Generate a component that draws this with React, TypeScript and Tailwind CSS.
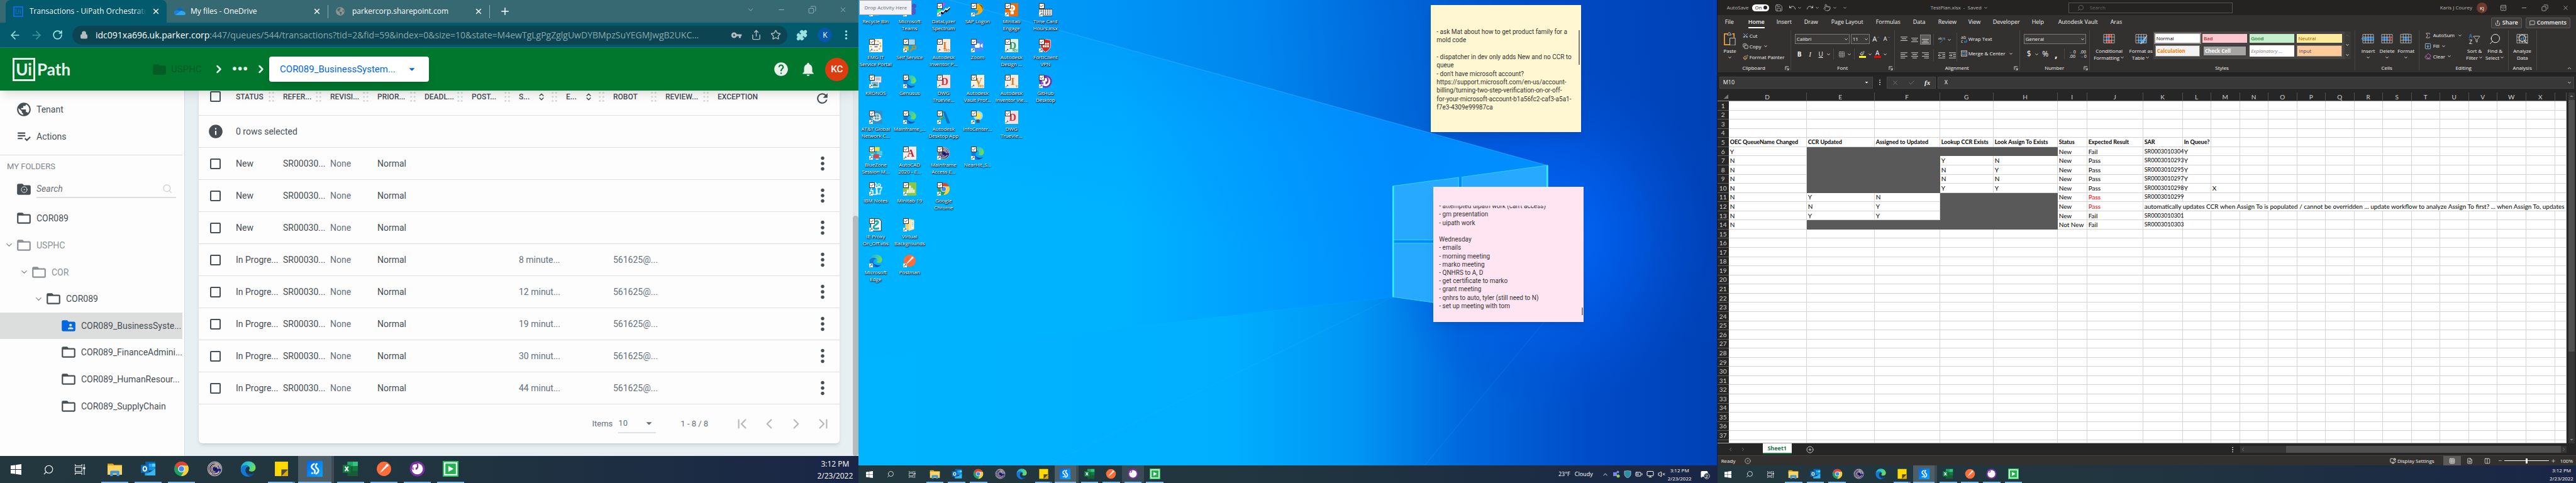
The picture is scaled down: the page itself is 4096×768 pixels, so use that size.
import React from "react";
import {
  ArrowLeft, ArrowRight, RotateCw, Lock, Share, Star, Puzzle, MoreVertical, X, Plus, Minus, Copy as CopyIcon,
  ChevronDown, ChevronUp, ChevronRight, ChevronLeft, ChevronFirst, ChevronLast, ChevronsUpDown, Search, Undo, Redo, Save,
  Pointer, Scissors, Paintbrush, Check, MessageSquare, Sigma, Eraser, Funnel, ArrowDownSquare, PanelTopOpen, Monitor,
  BatteryMedium, VolumeX, CirclePlus, Grid3x3, FileText, Columns2, MonitorCog, CircleDot,
} from "lucide-react";
import { FaGithub, FaGlobeAmericas } from "react-icons/fa";
import {
  MdPublic, MdPlaylistAddCheck, MdFolder, MdFolderOpen, MdFolderShared, MdHelp, MdNotifications, MdInfo, MdRefresh,
  MdArrowDropDown, MdMoreVert, MdVpnKey,
} from "react-icons/md";

type Pic = { className?: string };

/* ---------- application logos ---------- */

const Explorer = ({ className }: Pic) => (
  <svg viewBox="0 0 24 24" className={className}>
    <path d="M1 4h8l2 2h12v5H1z" fill="#e5a50f" />
    <path d="M1 7h22v14H1z" fill="#fcd462" />
    <path d="M5 23v-6.500c0-1 .7-1.700 1.700-1.700h10.600c1 0 1.700.7 1.700 1.700V23h-4v-4H9v4z" fill="#3a96dd" />
  </svg>
);
const Outlook = ({ className }: Pic) => (
  <svg viewBox="0 0 24 24" className={className}>
    <path d="M8 1h15v14H8z" fill="#0a64b4" />
    <path d="M13 4h5v5h-5z" fill="#28a8ea" />
    <path d="M18 4h5v5h-5z" fill="#50d9ff" />
    <path d="M13 9h10v5H13z" fill="#1490df" />
    <path d="M7 12l8 6 8-6v10H7z" fill="#1f9de8" />
    <path d="M7 22l16-10v10z" fill="#35b8f1" />
    <rect x="1" y="6" width="12" height="12" fill="#0f6cbd" />
    <ellipse cx="7" cy="12" rx="2.6" ry="3.2" fill="none" stroke="#fff" strokeWidth="1.7" />
  </svg>
);
const Chrome = ({ className }: Pic) => (
  <svg viewBox="0 0 24 24" className={className}>
    <circle cx="12" cy="12" r="11" fill="#1aa260" />
    <path d="M12 7h9.8A11 11 0 0 0 2.4 6.5l5.2 8A5 5 0 0 1 12 7z" fill="#e24134" />
    <path d="M21.8 7H12a5 5 0 0 1 4.4 7.5L11.5 23A11 11 0 0 0 21.8 7z" fill="#fdce3c" />
    <circle cx="12" cy="12" r="5.2" fill="#fff" />
    <circle cx="12" cy="12" r="4.1" fill="#4588f3" />
  </svg>
);
const Rings = ({ className }: Pic) => (
  <svg viewBox="0 0 24 24" className={className}>
    <circle cx="12" cy="12" r="11.2" fill="#b9b4b4" />
    <circle cx="12" cy="12" r="10" fill="#1d1f7c" />
    <path d="M12 2a10 10 0 0 1 10 10H12z" fill="#8f95c4" opacity="0.6" />
    <g fill="none" stroke="#e9cf8a" strokeWidth="1.100">
      <path d="M20.500 12a8.500 8.500 0 1 0-13 7" />
      <path d="M18.500 15a6.500 6.500 0 1 1-2-8" />
      <path d="M17 12a4.500 4.500 0 1 0-4 4.500" />
      <path d="M5 18c5 4.500 12 2 14-2" />
    </g>
    <circle cx="13.500" cy="12" r="2" fill="#10115c" />
  </svg>
);
const Edge = ({ className }: Pic) => (
  <svg viewBox="0 0 24 24" className={className}>
    <defs>
      <linearGradient id="edgeTop" x1="0" x2="1" y1="0.2" y2="0.5">
        <stop offset="0" stopColor="#1fa7e0" />
        <stop offset="0.55" stopColor="#35c9c0" />
        <stop offset="1" stopColor="#74dd4a" />
      </linearGradient>
    </defs>
    <path d="M7 10.500c-.6 7 6 12.500 15 8.300-2 3.300-5.500 5-9.500 5C6.500 23.800 3 18 7 10.500z" fill="#0d4f9e" />
    <path d="M.6 12.500C.6 8.500 4 6.300 8 6.300c2.500 0 4.500 1 5.500 2.700-3-.5-5.500 1.800-5.500 5.500 0 4.500 3.200 8 7 9-1 .3-2 .4-3 .4C5.500 23.900.6 19 .6 12.500z" fill="#1479d2" />
    <path d="M.7 11.600C1.100 5.200 6 .5 12.200.5c6.600 0 11.300 4.600 11.300 9.500 0 3.800-2.700 6-6 6-2.600 0-4.100-.9-4.100-1.900 0-.8 1-1.200 1-3 0-2.600-2.700-4.600-6-4.600-3.600 0-6.700 2-7.700 5.100z" fill="url(#edgeTop)" />
  </svg>
);
const Sticky = ({ className }: Pic) => (
  <svg viewBox="0 0 24 24" className={className}>
    <path d="M2 1h20v22H2z" fill="#ffd900" />
    <path d="M12 13h10v10H12z" fill="#e2a800" />
    <path d="M12 23V13h10z" fill="#4a4a48" />
  </svg>
);
const Studio = ({ className }: Pic) => (
  <svg viewBox="0 0 24 24" className={className}>
    <defs>
      <linearGradient id="studio" x1="0" x2="1" y1="0" y2="1">
        <stop offset="0" stopColor="#0068f0" />
        <stop offset="1" stopColor="#0aa4f5" />
      </linearGradient>
    </defs>
    <path d="M0 0h24v24H0z" fill="url(#studio)" />
    <g fill="none" stroke="#fff" strokeWidth="2.400" strokeLinecap="round">
      <path d="M11 4.500c-5 2-5 6-1 8 2.500 1.500 3 3.500 1.500 6" />
      <path d="M14 5.500c-1.500 3 0 4.500 1.500 5.500 3.500 2.500 2.500 6.500-1.500 8.500" />
    </g>
    <circle cx="15" cy="4.500" r="1.500" fill="#fff" />
    <circle cx="8" cy="18.500" r="1.500" fill="#fff" />
  </svg>
);
const Excel = ({ className }: Pic) => (
  <svg viewBox="0 0 24 24" className={className}>
    <path d="M7 1h16v22H7z" fill="#185c37" />
    <path d="M7 1h8v7H7z" fill="#21a366" />
    <path d="M15 1h8v7h-8z" fill="#33c481" />
    <path d="M15 8h8v7h-8z" fill="#107c41" />
    <rect x="0" y="6" width="12" height="12" fill="#107c41" />
    <path d="M3.500 8.500l5 7M8.500 8.500l-5 7" stroke="#fff" strokeWidth="1.800" />
  </svg>
);
const Postman = ({ className }: Pic) => (
  <svg viewBox="0 0 24 24" className={className}>
    <circle cx="12" cy="12" r="11" fill="#ff6c37" />
    <path d="M5.500 18.500l3-4.500 6-7 2 2-6.500 6z" fill="#fff" />
    <circle cx="16.800" cy="6.600" r="2.100" fill="#fff" />
  </svg>
);
const GitHub = ({ className }: Pic) => (
  <svg viewBox="0 0 24 24" className={className}>
    <circle cx="12" cy="12" r="11.500" fill="#7a2fa6" />
    <circle cx="12" cy="12" r="8.500" fill="#fff" />
    <FaGithub x="2" y="2" width="20" height="20" color="#7a2fa6" />
  </svg>
);
const Assistant = ({ className }: Pic) => (
  <svg viewBox="0 0 24 24" className={className}>
    <path d="M0 0h24v24H0z" fill="#28c65a" />
    <rect x="3" y="3" width="18" height="18" fill="#22b350" stroke="#fff" strokeWidth="2" />
    <path d="M8.500 7.500l8 4.500-8 4.500z" fill="#fff" />
  </svg>
);
const WinLogo = ({ className }: Pic) => (
  <svg viewBox="0 0 16 16" className={className} fill="#fff">
    <path d="M0 2.200L6.800 1.300v6.300H0zM7.600 1.200L16 0v7.600H7.600zM0 8.400h6.800v6.300L0 13.800zM7.600 8.400H16V16l-8.400-1.200z" />
  </svg>
);
const TaskView = ({ className }: Pic) => (
  <svg viewBox="0 0 16 16" className={className} fill="none" stroke="#fff" strokeWidth="1">
    <path d="M.500 0v2.500h10V0M.500 16v-2.500h10V16M.500 5h10v6H.500zM14 0v4M14 7.500V16" />
    <path d="M13 5h2v2h-2z" fill="#fff" />
  </svg>
);

/* ---------- taskbar ---------- */

type Task = { name: string; icon: (p: Pic) => React.ReactElement; open?: boolean };
const tasks: Task[] = [
  { name: "File Explorer", icon: Explorer, open: true },
  { name: "Outlook", icon: Outlook, open: true },
  { name: "Chrome", icon: Chrome, open: true },
  { name: "Mainframe Access", icon: Rings },
  { name: "Edge", icon: Edge },
  { name: "Sticky Notes", icon: Sticky, open: true },
  { name: "UiPath Studio", icon: Studio, open: true },
  { name: "Excel", icon: Excel, open: true },
  { name: "Postman", icon: Postman, open: true },
  { name: "GitHub Desktop", icon: GitHub, open: true },
  { name: "UiPath Assistant", icon: Assistant, open: true },
];

function Taskbar({ large, hover, children }: { large?: boolean; hover?: string; children: React.ReactNode }) {
  return (
    <footer
      className={`flex shrink-0 bg-linear-to-r from-[#22373e] via-[#20353f] via-50% to-[#1a2546] font-['Open_Sans',sans-serif] text-white ${
        large ? "h-[43px] text-xs" : "h-[28px] text-[8px]"
      }`}
    >
      {[
        { n: "Start", i: <WinLogo className={large ? "size-[17px]" : "size-[11px]"} /> },
        { n: "Search", i: <Search strokeWidth={1.5} className={`-scale-x-100 ${large ? "size-[18px]" : "size-[12px]"}`} /> },
        { n: "Task View", i: <TaskView className={large ? "size-[17px]" : "size-[11px]"} /> },
      ].map((b) => (
        <button key={b.n} aria-label={b.n} className={`flex items-center justify-center ${large ? "w-[51px]" : "w-[34px]"}`}>
          {b.i}
        </button>
      ))}
      <div className={`flex ${large ? "ml-[3px] w-[587px]" : "ml-[2px] w-[384px]"}`}>
        {tasks.map((t) => {
          const active = t.name === "UiPath Studio";
          const Icon = t.icon;
          return (
            <button
              key={t.name}
              aria-label={t.name}
              className={`flex flex-1 flex-col items-center justify-between ${
                active ? "border-r-4 border-[#3c4b54] bg-[#4e5e67]" : hover === t.name ? "bg-[#3a4a54]" : ""
              }`}
            >
              <span className="flex flex-1 items-center">
                <Icon className={large ? "size-[25px]" : "size-[17px]"} />
              </span>
              <span
                className={`h-[2px] ${active ? "w-full" : "w-4/5"} ${t.open ? "bg-[#76b9ed]" : ""} ${
                  t.name === "Sticky Notes" ? "border-r-4 border-[#4f86b4]" : ""
                }`}
              />
            </button>
          );
        })}
      </div>
      <div className="ml-auto flex items-center">{children}</div>
    </footer>
  );
}

const Clock = ({ large }: { large?: boolean }) => (
  <div className={`text-center ${large ? "w-[75px] leading-[19px]" : "w-[46px] leading-[13px]"}`}>
    <div>3:12 PM</div>
    <div>2/23/2022</div>
  </div>
);

/* ---------- left screen: browser with Orchestrator ---------- */

const BrowserTab = ({ title, icon, active }: { title: string; icon: React.ReactNode; active?: boolean }) => (
  <div className={`flex h-full w-[256px] items-center pr-[10px] pl-[12px] ${active ? "rounded-t-lg bg-[#035a6c]" : ""}`}>
    <span className="flex w-[26px]">{icon}</span>
    <span className={`flex-1 overflow-hidden whitespace-nowrap ${active ? "mask-r-from-90%" : ""}`}>{title}</span>
    <button aria-label="Close tab" className="ml-[8px]">
      <X className="size-[14px]" strokeWidth={2.500} />
    </button>
  </div>
);

const Grip = () => (
  <svg viewBox="0 0 12 18" className="h-[18px] w-[11px]" fill="#d9dcdd">
    {[2, 9, 16].map((y) => (
      <g key={y}>
        <circle cx="3" cy={y} r="1.700" />
        <circle cx="9" cy={y} r="1.700" />
      </g>
    ))}
  </svg>
);

const heads = [
  ["STATUS", "w-[75px]"], ["REFER...", "w-[75px]"], ["REVISI...", "w-[75px]"], ["PRIOR...", "w-[75px]"], ["DEADL...", "w-[75px]"],
  ["POST...", "w-[75px]"], ["S...", "w-[75px]"], ["E...", "w-[75px]"], ["ROBOT", "w-[83px]"], ["REVIEW...", "w-[83px]"], ["EXCEPTION", ""],
];
const waits = ["", "", "", "8 minute...", "12 minut...", "19 minut...", "30 minut...", "44 minut..."];

const Box = ({ label }: { label: string }) => (
  <input type="checkbox" aria-label={label} className="block size-[17px] appearance-none rounded-[2px] border-2 border-[#474e54]" />
);

const folders = [
  { t: "COR089", d: 0 },
  { t: "USPHC", d: 0, open: true, dim: true },
  { t: "COR", d: 1, open: true, dim: true },
  { t: "COR089", d: 2, open: true },
  { t: "COR089_BusinessSyste...", d: 3, on: true },
  { t: "COR089_FinanceAdmini...", d: 3 },
  { t: "COR089_HumanResour...", d: 3 },
  { t: "COR089_SupplyChain", d: 3 },
];
const indents = ["pl-[7px]", "pl-[31px]", "pl-[54px]", "pl-[78px]"];

function Orchestrator() {
  return (
    <section className="flex min-w-0 flex-col overflow-hidden">
      <div className="flex h-[36px] shrink-0 items-center bg-[#366972] pl-[9px] font-['Open_Sans',sans-serif] text-xs text-white">
        <BrowserTab
          active
          title="Transactions - UiPath Orchestrator"
          icon={<span className="border-2 border-[#0d6ae0] px-px text-[10px] leading-[13px] text-[#0d7af0]">Ui</span>}
        />
        <BrowserTab
          title="My files - OneDrive"
          icon={
            <svg viewBox="0 0 20 14" className="w-[18px]">
              <path d="M5 6a5 5 0 0 1 10-1l1 4H3z" fill="#0f63c8" />
              <path d="M4 5c4-1 6 1 8 3l-6 4-3 1a4 4 0 0 1 1-8z" fill="#1781d8" />
              <path d="M9 8c2-3 6-3 7-1 3 0 4 2 4 3.500S18.500 14 17 14H5c-2 0-3-1-3-1z" fill="#2ba7ea" />
            </svg>
          }
        />
        <span className="h-[21px] w-px bg-[#8fb0b5]" />
        <BrowserTab title="parkercorp.sharepoint.com" icon={<FaGlobeAmericas className="size-[14px] text-[#93928f]" />} />
        <span className="h-[21px] w-px bg-[#8fb0b5]" />
        <button aria-label="New tab" className="ml-[15px]">
          <Plus className="size-[18px]" />
        </button>
        <div className="mb-[6px] ml-auto flex text-[#a9c0c4]">
          {[ChevronDown, Minus, CopyIcon, X].map((I, i) => (
            <button key={i} aria-label="Window control" className="flex w-[49px] justify-center">
              <I className="size-[13px] -scale-x-100" strokeWidth={1.500} />
            </button>
          ))}
        </div>
      </div>
      <div className="flex h-[40px] shrink-0 items-center border-b border-[#2a7482] bg-[#035a6c] pr-[10px] text-[#9be3df]">
        <button aria-label="Back" className="ml-[14px]"><ArrowLeft className="size-[20px]" /></button>
        <button aria-label="Forward" className="ml-[14px] text-[#3f96a0]"><ArrowRight className="size-[20px]" /></button>
        <button aria-label="Reload" className="ml-[15px]"><RotateCw className="size-[17px]" strokeWidth={2.500} /></button>
        <div className="ml-[15px] flex h-[30px] min-w-0 flex-1 items-center gap-[14px] rounded-full bg-[#0c4551] pr-[10px] pl-[12px] text-[#b3bdc0]">
          <Lock className="size-[13px] fill-current" />
          <div role="textbox" aria-label="Address" className="-ml-[2px] min-w-0 flex-1 overflow-hidden font-['Open_Sans',sans-serif] text-sm whitespace-nowrap text-[#8aa9ae]">
            <span className="text-white">idc091xa696.uk.parker.corp</span>
            :447/queues/544/transactions?tid=2&amp;fid=59&amp;index=0&amp;size=10&amp;state=M4ewTgLgPgZglgUwDYBMpzSuYEGMJwgB2UKC...
          </div>
          <MdVpnKey className="size-[18px] shrink-0" />
          <Share className="size-[17px] shrink-0" />
          <Star className="size-[17px] shrink-0" />
        </div>
        <button aria-label="Extensions" className="ml-[14px]"><Puzzle className="size-[18px] fill-current" /></button>
        <button className="ml-[16px] size-[23px] rounded-full bg-[#0459a6] font-['Open_Sans',sans-serif] text-xs text-white">K</button>
        <button aria-label="Menu" className="ml-[13px]"><MoreVertical className="size-[19px]" strokeWidth={2.500} /></button>
      </div>
      <header className="relative z-10 flex h-[68px] shrink-0 items-center bg-[#00772d] font-['Roboto',sans-serif] text-[15px] text-[#e6f2ea] shadow-lg">
        <div className="ml-[20px] flex items-center font-['Lato',sans-serif] font-bold">
          <span className="flex h-[37px] w-[36px] items-center justify-center border-3 border-[#e6f2ea] text-[26px]">Ui</span>
          <span className="ml-[3px] text-[26px]">Path</span>
        </div>
        <div className="flex flex-1 items-center pl-[129px]">
          <MdFolder className="size-[25px] text-[#035c24]" />
          <span className="w-[72px] pl-[6px] text-[#035c24]">USPHC</span>
          <ChevronRight className="size-[20px]" strokeWidth={3} />
          <span className="w-[47px] text-center text-2xl leading-none font-bold">•••</span>
          <ChevronRight className="size-[20px]" strokeWidth={3} />
          <button className="ml-[3px] flex h-[40px] w-[254px] items-center rounded-[4px] bg-white pl-[17px] text-[#0067df] shadow-lg">
            COR089_BusinessSystem...
            <MdArrowDropDown className="ml-auto size-[22px]" />
            <span className="w-[16px]" />
          </button>
        </div>
        <button aria-label="Help"><MdHelp className="size-[26px]" /></button>
        <button aria-label="Alerts" className="ml-[17px]"><MdNotifications className="size-[26px]" /></button>
        <button className="mr-[16px] ml-[14px] size-[37px] rounded-full bg-[#dd3c11] font-medium text-white">KC</button>
      </header>
      <div className="flex min-h-0 flex-1 bg-[#e8eff3] font-['Roboto',sans-serif] text-sm text-[#474e54]">
        <nav className="w-[294px] shrink-0 border-r border-[#d5dbde] bg-[#fdfdfd] pr-[3px]">
          <div className="border-b border-[#dcdcdc] py-[8px]">
            <a href="#tenant" className="flex h-[43px] items-center pl-[25px]"><MdPublic className="size-[26px]" /><span className="pl-[7px]">Tenant</span></a>
            <a href="#actions" className="flex h-[43px] items-center pl-[25px]"><MdPlaylistAddCheck className="size-[26px]" /><span className="pl-[7px]">Actions</span></a>
          </div>
          <h2 className="pl-[11px] text-[13px] leading-[35px] text-[#7f868b]">MY FOLDERS</h2>
          <div className="flex h-[38px] items-center pl-[25px]">
            <span className="relative"><MdFolder className="size-[26px]" /><CircleDot className="absolute top-[8px] left-[8px] size-[11px] text-white" /></span>
            <label className="mr-[10px] ml-[7px] flex h-[27px] flex-1 items-center border-b-2 border-[#dcdedf]">
              <input aria-label="Search folders" placeholder="Search" className="w-[150px] italic placeholder:text-[#6b7278]" />
              <Search className="mr-[6px] ml-auto size-[16px] text-[#cfd1d2]" />
            </label>
          </div>
          <ul className="mt-[6px] flex h-[341px] flex-col">
            {folders.map((f, i) => (
              <li key={i} className={`flex flex-1 items-center whitespace-nowrap ${indents[f.d]} ${f.on ? "bg-[#dcdedd]" : ""} ${f.dim ? "text-[#8b9196]" : ""}`}>
                <span className="w-[18px]">{f.open && <ChevronDown className="size-[15px] text-[#7f868b]" />}</span>
                {f.on ? <MdFolderShared className="size-[26px] shrink-0 text-[#0067df]" /> : <MdFolderOpen className="size-[26px] shrink-0" />}
                <a href="#folder" className="pl-[7px]">{f.t}</a>
              </li>
            ))}
          </ul>
        </nav>
        <main className="flex min-w-0 flex-1 flex-col pl-[22px]">
          <div className="flex min-h-0 flex-1">
            <div className="mb-[20px] flex min-w-0 flex-1 flex-col rounded-b-[6px] bg-[#fdfdfd] shadow-md">
              <table className="w-full table-fixed border-separate border-spacing-0 text-left">
                <thead>
                  <tr className="h-[40px] align-top text-xs font-medium">
                    <th className="w-[59px] border-b border-[#dcdedf] pt-[1px] pl-[18px]"><Box label="Select all" /></th>
                    {heads.map(([h, w], i) => (
                      <th key={h} className={`border-b border-[#dcdedf] font-medium ${w}`}>
                        <span className="flex h-[20px] items-center whitespace-nowrap">
                          {h}
                          {(h === "S..." || h === "E...") && <ChevronsUpDown className="ml-[12px] size-[14px]" strokeWidth={2.500} />}
                          {i < 10 && <span className="mr-[13px] ml-auto"><Grip /></span>}
                        </span>
                      </th>
                    ))}
                    <th className="w-[53px] border-b border-[#dcdedf]"><button aria-label="Refresh" className="ml-[13px]"><MdRefresh className="size-[25px]" /></button></th>
                  </tr>
                </thead>
                <tbody>
                  <tr className="h-[51px]">
                    <td className="border-b border-[#dcdedf] pl-[14px]"><MdInfo className="size-[26px]" /></td>
                    <td colSpan={12} className="border-b border-[#dcdedf]">0 rows selected</td>
                  </tr>
                  {waits.map((w, i) => (
                    <tr key={i} className="h-[51px] whitespace-nowrap [&>td]:border-b [&>td]:border-[#dcdedf]">
                      <td className="pl-[18px]"><Box label={`Select row ${i + 1}`} /></td>
                      <td>{w ? "In Progre..." : "New"}</td>
                      <td>SR00030...</td>
                      <td className="text-[#66707a]">None</td>
                      <td>Normal</td>
                      <td />
                      <td />
                      <td className="text-[#66707a]">{w}</td>
                      <td />
                      <td className="text-[#66707a]">{w && "561625@..."}</td>
                      <td />
                      <td />
                      <td><button aria-label="Row actions" className="block pl-[9px]"><MdMoreVert className="size-[34px]" /></button></td>
                    </tr>
                  ))}
                </tbody>
              </table>
              <div className="flex min-h-0 flex-1 items-center text-[13px] text-[#66707a]">
                <label className="ml-auto flex items-center">
                  Items
                  <span className="relative ml-[9px] flex items-center border-b-2 border-[#dcdedf]">
                    <select className="h-[28px] w-[60px] appearance-none"><option>10</option></select>
                    <MdArrowDropDown className="pointer-events-none absolute right-0 size-[22px]" />
                  </span>
                </label>
                <span className="ml-[39px] w-[76px]">1 - 8 / 8</span>
                <div className="mr-[5px] flex text-[#b5b9bb]">
                  {[ChevronFirst, ChevronLeft, ChevronRight, ChevronLast].map((I, i) => (
                    <button key={i} aria-label="Page" className="flex w-[43px] justify-center"><I className="size-[26px]" /></button>
                  ))}
                </div>
              </div>
            </div>
            <div className="ml-[21px] w-[9px] bg-[#dfe5e8] pt-[199px]">
              <div className="h-full rounded-full bg-[#b6babc]" />
            </div>
          </div>
        </main>
      </div>
      <Taskbar large><Clock large /></Taskbar>
    </section>
  );
}

/* ---------- middle screen: desktop ---------- */

const Letter = ({ l, bg, fg, tag }: { l: string; bg: string; fg: string; tag?: string }) => (
  <svg viewBox="0 0 24 24" className="size-full">
    <rect width="24" height="24" fill={bg} />
    <text x="14" y="18" textAnchor="middle" fontSize="18" fontWeight="700" fontFamily="Liberation Serif, serif" fill={fg}>{l}</text>
    <text x="23" y="23" textAnchor="end" fontSize="5" fontWeight="700" fontFamily="Open Sans, sans-serif" fill={fg}>{tag}</text>
  </svg>
);
const full = "size-full";
const S = ({ children }: { children: React.ReactNode }) => <svg viewBox="0 0 24 24" className={full}>{children}</svg>;

const Lyzer = <S><path d="M6 0h10L4 14z" fill="#f3f" /><path d="M0 14l6-6v8H0z" fill="#1f3" /><path d="M2 22l6-5 2 2 5-6 2 2 6-6" stroke="#000" strokeWidth="2.500" fill="none" /><path d="M3 18l6-4 2 2 5-6 2 2 5-5" stroke="#fff" strokeWidth="2" fill="none" /></S>;
const Sap = <S><path d="M8 2c8-4 16 2 14 10-2 7-10 11-18 9 6-1 10-4 9-9-4 3-8 0-5-10z" fill="#f6ab13" /><path d="M14 2c6 0 9 5 7 11 0-5-3-8-7-11z" fill="#7b4a00" /></S>;
const Engage = <S><path d="M0 0h24v24H0z" fill="#ea6f0a" /><circle cx="13" cy="9" r="5.500" fill="#fff" /><path d="M10 15h6v5h-6z" fill="#fff" /><path d="M13 6v6M10 9h6" stroke="#ea6f0a" /></S>;
const TimeCard = <S><path d="M0 11h24v12H0z" fill="#fff" stroke="#222" /><path d="M4 12v10M8 12v10M12 12v10M16 12v10M20 12v10" stroke="#333" strokeDasharray="1.500 1" strokeWidth="2" /></S>;
const Emg = <S><path d="M0 0h24v24H0z" fill="#fff" /><circle cx="12" cy="12" r="9" fill="none" stroke="#f0a63a" strokeWidth="2.500" strokeDasharray="3 2" /><path d="M6 10h12M10 14h5" stroke="#333" strokeWidth="2" strokeDasharray="2 1" /></S>;
const SelfServ = <S><path d="M8 0h14v11H8z" fill="#9fd9f5" stroke="#4a5a66" /><path d="M1 13h9v8H1z" fill="#e7b923" /><circle cx="20" cy="15" r="3" fill="none" stroke="#c98e10" strokeWidth="2" /><path d="M18 17l-6 6" stroke="#c98e10" strokeWidth="2.500" /></S>;
const ZoomApp = <S><rect y="1" width="23" height="22" rx="6" fill="#3f8cfd" /><rect x="7" y="8" width="9" height="8" rx="2" fill="#fff" /><path d="M17 11l4-3v8l-4-3z" fill="#fff" /></S>;
const Forti = <S><path d="M3 2c6 0 7-2 9-2 2 0 4 2 9 2v10c0 6-5 9-9 12-4-3-9-6-9-12z" fill="#d42a1d" stroke="#eee" /><path d="M7 7h3v3H7zM11 7h3v3h-3zM15 7h3v3h-3zM7 11h3v4H7zM11 11h3v4h-3zM15 11h3v4h-3z" fill="#fff" /></S>;
const Kronos = <S><path d="M10 3h12v11H10z" fill="#eef2f6" stroke="#8a96a2" /><path d="M12 6h8M12 9h8" stroke="#667" /><path d="M4 12h13v10H4z" fill="#7fb3dd" stroke="#eee" strokeWidth="1.500" /><path d="M5 20l5-4 6 4z" fill="#3b7d4a" /></S>;
const Att = <S><rect width="24" height="24" rx="3" fill="#3490c5" /><g fill="none" stroke="#fff" strokeWidth="1.200"><circle cx="14" cy="12" r="6.500" /><path d="M7.500 12h13M14 5.500v13M10.500 6.500c-1.500 4-1.500 7 0 11M17.500 6.500c1.500 4 1.500 7 0 11" /><path d="M4 13c4 5 14 6 19 1" /></g></S>;
const AdApp = <S><path d="M9 6l5-5-9 21H0z" fill="#6fbf4a" /><path d="M11 1h4l9 22h-6z" fill="#1273bd" /><path d="M3 16l10-5 3 4z" fill="#2a9b9b" /></S>;
const Bulb = <S><circle cx="13" cy="9" r="8.500" fill="#9cdcff" /><circle cx="13" cy="9" r="5.500" fill="#ffe14a" /><path d="M9.500 16h6v6h-6z" fill="#4b5560" /></S>;
const BlueZone = <S><path d="M10 1h9v7h-9z" fill="#f2e53a" /><path d="M1 6h9v7H1z" fill="#6ad07c" /><path d="M14 8h10v8H14z" fill="#58c7e2" /><path d="M8 14h10v7H8z" fill="#e0443e" /><path d="M3 15h5M12 23h5M18 18h4" stroke="#dde" strokeWidth="2" /></S>;
const Notes = <S><g fill="none" stroke="#e3f6ff" strokeWidth="1.800"><circle cx="10" cy="4" r="3" /><circle cx="18" cy="5" r="2.500" /><path d="M5 9h8v13H7v-7H3zM14 9h9l-2 6h-1v6h-5z" /></g></S>;
const Minitab = <S><path d="M0 0h24v24H0z" fill="#8dc63f" /><path d="M7 13h3v6H7zM11 6h3v13h-3zM15 10h2.500v9H15zM18.500 13H21v6h-2.500z" fill="#fff" /></S>;
const Vbs = <S><path d="M3 1h15l4 4v18H3z" fill="#fff" stroke="#111" /><path d="M8 7c8-4 12 0 4 5s-3 9 6 6" stroke="#14b1b8" strokeWidth="3.500" fill="none" /></S>;
const Virtual = <S><path d="M4 3l7-2v20l-7 1z" fill="#f6d06c" /><path d="M10 1l10 2v17l-10 3z" fill="#fbe6a2" /><path d="M15 6h4v12h-4z" fill="#fff" /><path d="M16 8h2M16 11h2M16 14h2" stroke="#3a96dd" /></S>;
const Teams = <S><circle cx="20" cy="5" r="4" fill="#4b53bc" /><rect x="12" y="9" width="11" height="12" rx="4" fill="#5059c9" /></S>;
const Bin = <S><path d="M5 4h14l-2 18H7z" fill="#e8f2fa" stroke="#8aa" /></S>;
const edgePic = <Edge className={full} />;

type Item = [string[], React.ReactNode, boolean?];
const columns: Item[][] = [
  [
    [["Recycle Bin"], Bin], [["EMG IT", "Service Portal"], Emg], [["KRONOS"], Kronos], [["AT&T Global", "Network C..."], Att],
    [["BlueZone", "Session M..."], BlueZone], [["IBM Notes"], Notes], [["IE Proxy", "On_Off.vbs"], Vbs], [["Microsoft", "Edge"], edgePic, true],
  ],
  [
    [["Microsoft", "Teams"], Teams], [["Self Service"], SelfServ], [["Genusus"], edgePic], [["Mainframe_..."], edgePic],
    [["AutoCAD", "2020 - E..."], <Letter l="A" bg="#f6ebe9" fg="#c22026" />], [["Minitab 19"], Minitab], [["Virtual", "Backgrounds"], Virtual],
    [["Postman"], <Postman className={full} />, true],
  ],
  [
    [["DataLyzer", "Spectrum"], Lyzer], [["Autodesk", "Inventor P..."], <Letter l="I" bg="#fbeadb" fg="#d37a2c" tag="PRO" />],
    [["DWG", "TrueVie..."], <Letter l="D" bg="#f5dede" fg="#c6343b" />], [["Autodesk", "Desktop App"], AdApp],
    [["Mainframe", "Access E..."], <Rings className={full} />], [["Google", "Chrome"], <Chrome className={full} />],
  ],
  [
    [["SAP Logon"], Sap], [["Zoom"], ZoomApp], [["Autodesk", "Vault Prof..."], <Letter l="V" bg="#fbefd9" fg="#c98c2b" tag="PRO" />],
    [["InfoCenter..."], Bulb], [["NearHit_S..."], edgePic],
  ],
  [
    [["Minitab", "Engage"], Engage], [["Autodesk", "Design ..."], <Letter l="D" bg="#e0f0e8" fg="#2c9a62" tag="REV" />],
    [["Autodesk", "Inventor Vie..."], <Letter l="I" bg="#fbeadb" fg="#d37a2c" tag="V" />], [["DWG", "TrueVie..."], <Letter l="D" bg="#f5dede" fg="#c6343b" />],
  ],
  [[["Time Card", "Hours.xlsx"], TimeCard], [["FortiClient", "VPN"], Forti], [["GitHub", "Desktop"], <GitHub className={full} />]],
];

const Shortcut = ({ item: [lines, icon, plain] }: { item: Item }) => (
  <div className="flex h-[57px] flex-col items-center pt-[5px]">
    <span className="relative size-[21px]">
      {icon}
      <svg viewBox="0 0 6 6" className="absolute bottom-0 left-0 size-[6px]">
        <path d="M0 0h6v6H0z" fill="#fff" />
        <path d="M1.500 5c0-2 1-2.500 3-2.500M3 1.200h1.800V3.500" stroke="#2465b5" fill="none" />
      </svg>
      {!plain && (
        <label className="absolute top-0 left-0 size-[9px]">
          <input type="checkbox" defaultChecked aria-label={lines.join(" ")} className="block size-[9px] appearance-none border border-[#333] bg-white" />
          <Check className="pointer-events-none absolute top-px left-px size-[7px] text-[#333]" strokeWidth={3} />
        </label>
      )}
    </span>
    <span className="mt-[2px] text-center text-[8px] leading-[11px] whitespace-nowrap text-white [text-shadow:0_1px_2px_#000,1px_1px_1px_#000]">
      {lines.map((l) => <span key={l} className="block">{l}</span>)}
    </span>
  </div>
);

const Wallpaper = () => (
  <svg viewBox="0 0 1365 768" preserveAspectRatio="none" className="absolute inset-0 size-full">
    <defs>
      <linearGradient id="base" gradientUnits="userSpaceOnUse" x1="0" x2="1365" y1="120" y2="0">
        <stop offset="0" stopColor="#00a2fa" />
        <stop offset="0.3" stopColor="#0095f6" />
        <stop offset="0.46" stopColor="#0086ee" />
        <stop offset="0.62" stopColor="#0068da" />
        <stop offset="0.78" stopColor="#004cc6" />
        <stop offset="1" stopColor="#0040b4" />
      </linearGradient>
      <linearGradient id="beam" gradientUnits="userSpaceOnUse" x1="340" x2="260" y1="0" y2="330">
        <stop offset="0" stopColor="#0099f8" />
        <stop offset="0.5" stopColor="#00aaff" />
        <stop offset="1" stopColor="#00b3ff" />
      </linearGradient>
      <linearGradient id="shade" gradientUnits="userSpaceOnUse" x1="420" x2="1095" y1="0" y2="0">
        <stop offset="0" stopColor="#0084fc" stopOpacity="0" />
        <stop offset="0.65" stopColor="#0086fd" stopOpacity="0.85" />
        <stop offset="1" stopColor="#0090ff" />
      </linearGradient>
      <radialGradient id="glow" cx="0.5" cy="0.5" r="0.5">
        <stop offset="0" stopColor="#006cff" />
        <stop offset="0.5" stopColor="#0060f0" stopOpacity="0.6" />
        <stop offset="1" stopColor="#0050d8" stopOpacity="0" />
      </radialGradient>
      <linearGradient id="lower" gradientUnits="userSpaceOnUse" x1="0" x2="1365" y1="0" y2="0">
        <stop offset="0" stopColor="#00b4ff" />
        <stop offset="0.42" stopColor="#00b0ff" />
        <stop offset="0.58" stopColor="#0096f4" />
        <stop offset="0.7" stopColor="#006ade" />
        <stop offset="0.85" stopColor="#004cc8" />
        <stop offset="1" stopColor="#0040b4" />
      </linearGradient>
    </defs>
    <rect width="1365" height="768" fill="url(#base)" />
    <path d="M0 590L850 480L1095 500L1365 560V768H0z" fill="url(#lower)" />
    <ellipse cx="1095" cy="390" rx="270" ry="290" fill="url(#glow)" />
    <path d="M0 0H145L1095 273V525L850 490L0 592z" fill="url(#beam)" />
    <path d="M420 79L1095 273V525L850 490L420 541z" fill="url(#shade)" />
    <path d="M145 0L1095 273" stroke="#3fb4ff" strokeWidth="1.500" opacity="0.4" />
    <path d="M850 490L300 768M1095 525L900 768" stroke="#5cc8ff" strokeWidth="1" opacity="0.12" />
    <g fill="#27a9ff" stroke="#2fd8ff" strokeWidth="1">
      <path d="M850 307L954 292.600V396H850z" />
      <path d="M959.500 292L1095.600 272.800V396H959.500z" />
      <path d="M850 401.400H954V505L850 490z" />
      <path d="M959.500 401.400H1095.600V525L959.500 506z" />
    </g>
    <path d="M850 307V490M1095 273V525" stroke="#35f0ff" strokeWidth="2.500" />
  </svg>
);

const asks = [
  "- ask Mat about how to get product family for a", "mold code", "", "- dispatcher in dev only adds New and no CCR to", "queue",
  "- don't have microsoft account?", "https://support.microsoft.com/en-us/account-", "billing/turning-two-step-verification-on-or-off-",
  "for-your-microsoft-account-b1a56fc2-caf3-a5a1-", "f7e3-4309e99987ca",
];
const diary = [
  "- attempted uipath work (can't access)", "- gm presentation", "- uipath work", "", "Wednesday", "- emails", "- morning meeting",
  "- marko meeting", "- QNHRS to A, D", "- get certificate to marko", "- grant meeting", "- qnhrs to auto, tyler (still need to N)",
  "- set up meeting with tom",
];

const Note = ({ className, lines, body, list }: { className: string; lines: string[]; body: string; list: string }) => (
  <article className={`absolute w-[239px] overflow-hidden font-['Roboto',sans-serif] text-[10px] text-[#333] shadow-lg ${className}`}>
    <div className={`flex flex-col justify-end overflow-hidden ${body}`}>
      <div className={`flex shrink-0 flex-col whitespace-nowrap ${list}`}>
        {lines.map((l, i) => <p key={i} className="flex min-h-0 flex-1 items-center">{l}</p>)}
      </div>
    </div>
  </article>
);

function Desktop() {
  return (
    <section className="flex min-w-0 flex-col overflow-hidden font-['Open_Sans',sans-serif]">
      <div className="relative flex-1">
        <Wallpaper />
        <div className="relative flex">
          {columns.map((c, i) => (
            <div key={i} className="w-[54px]">
              {c.map((it) => <Shortcut key={it[0].join()} item={it} />)}
            </div>
          ))}
        </div>
        <div className="absolute top-0 left-px flex h-[24px] w-[84px] items-center justify-center border border-[#9a9aa0] bg-[#f1f2f8] text-[8px] text-[#6b6b70]">
          Drop Activity Here
        </div>
        <Note className="top-[8px] left-[910px] h-[202px] bg-[#fff7d1]" body="mt-[36px] ml-[9px] h-[133px]" list="h-[133px]" lines={asks} />
        <span className="absolute top-[48px] left-[1145px] h-[55px] w-[2px] bg-[#807e74]" />
        <Note className="top-[297px] left-[914px] h-[215px] bg-[#ffe4f1]" body="mt-[30px] ml-[9px] h-[166px]" list="h-[172px]" lines={diary} />
        <span className="absolute top-[489px] left-[1150px] h-[12px] w-[2px] bg-[#807e7e]" />
      </div>
      <Taskbar hover="GitHub Desktop">
        <span className="mr-[14px] text-[9px]">23°F&nbsp;&nbsp; Cloudy</span>
        <div className="flex items-center gap-[6px]">
          <ChevronUp className="size-[11px]" />
          <svg viewBox="0 0 12 12" className="size-[12px]"><path d="M1 3h6v6H1z" fill="#7b83eb" /><circle cx="8.500" cy="2.500" r="2" fill="#7b83eb" /><circle cx="9" cy="9" r="2.500" fill="#8fd13f" /></svg>
          <svg viewBox="0 0 12 12" className="size-[12px]"><path d="M6 0c2 1 3 1 5 1v5c0 3-3 5-5 6-2-1-5-3-5-6V1c2 0 3 0 5-1z" fill="#2a8f9c" stroke="#9ad" /></svg>
          <BatteryMedium className="size-[12px]" />
          <Monitor className="size-[12px]" />
          <VolumeX className="size-[12px]" />
        </div>
        <Clock />
        <span className="relative mr-[15px] ml-[10px]">
          <MessageSquare className="size-[12px] fill-white" />
          <span className="absolute top-[4px] left-[5px] size-[10px] rounded-full border border-[#aaa] bg-[#333c4c] text-center text-[8px] leading-[8px]">2</span>
        </span>
      </Taskbar>
    </section>
  );
}

/* ---------- right screen: spreadsheet ---------- */

const Chev = () => <ChevronDown className="size-[7px] shrink-0" strokeWidth={3} />;
const Rule = () => <span className="mx-[4px] h-[18px] w-px shrink-0 bg-[#4a4846]" />;
const Tool = ({ n, children, on }: { n: string; children: React.ReactNode; on?: boolean }) => (
  <button aria-label={n} className={`flex h-[16px] w-[17px] shrink-0 items-center justify-center ${on ? "border border-[#8a8886] bg-[#5c5a58]" : ""}`}>{children}</button>
);
const Lines = ({ d }: { d: string }) => (
  <svg viewBox="0 0 12 12" className="size-[11px]" fill="none" stroke="#e1dfdd" strokeWidth="1"><path d={d} /></svg>
);
const Group = ({ name, w, children, launcher }: { name: string; w: string; children: React.ReactNode; launcher?: boolean }) => (
  <section className={`flex h-[64px] shrink-0 flex-col border-r border-[#4a4846] ${w}`}>
    <div className="flex h-[54px] shrink-0">{children}</div>
    <div className="relative text-center leading-[12px]">
      {name}
      {launcher && (
        <svg viewBox="0 0 8 8" className="absolute top-[3px] right-[2px] size-[7px]" fill="none" stroke="#e1dfdd"><path d="M1 7V1h6M3 3l4 4M7 3.500V7H3.500" /></svg>
      )}
    </div>
  </section>
);
const Big = ({ icon, lines, w, arrow }: { icon: React.ReactNode; lines: string[]; w: string; arrow?: boolean }) => (
  <button className={`flex flex-col items-center pt-[3px] leading-[11px] whitespace-nowrap ${w}`}>
    <span className="mb-[3px] flex h-[21px] items-center">{icon}</span>
    <span>{lines[0]}</span>
    <span className="flex h-[11px] items-center gap-[1px]">{lines[1]}{arrow && <Chev />}</span>
  </button>
);
const Drop = ({ v, w, label }: { v: string; w: string; label: string }) => (
  <span className={`relative flex h-[16px] shrink-0 items-center border border-[#797775] bg-[#3b3a39] ${w}`}>
    <select aria-label={label} className="w-full appearance-none pl-[2px]"><option>{v}</option></select>
    <span className="pointer-events-none absolute right-[1px]"><Chev /></span>
  </span>
);
const Sheet = ({ accent, extra }: { accent: React.ReactNode; extra?: React.ReactNode }) => (
  <svg viewBox="0 0 24 20" className="h-[17px] w-[21px]" fill="none">
    {accent}
    <path d="M2 2h20v16H2zM2 7h20M2 13h20M7 2v16M12 2v16M17 2v16" stroke="#d2d0ce" strokeWidth="0.900" />
    {extra}
  </svg>
);

const gallery: [string, string][] = [
  ["Normal", "bg-white text-black outline-2 outline-[#8a8886]"], ["Bad", "bg-[#ffc7ce] text-[#9c0006]"], ["Good", "bg-[#c6efce] text-[#006100]"],
  ["Neutral", "bg-[#ffeb9c] text-[#9c5700]"], ["Calculation", "border border-[#7f7f7f] bg-[#f2f2f2] font-bold text-[#fa7d00]"],
  ["Check Cell", "border-2 border-[#3f3f3f] bg-[#a5a5a5] font-bold text-white"], ["Explanatory ...", "bg-white text-[#7f7f7f] italic"],
  ["Input", "border border-[#7f7f7f] bg-[#ffcc99] text-[#3f3f76]"],
];

const cols: [string, string][] = [
  ["D", "w-[124px]"], ["E", "w-[108px]"], ["F", "w-[104px]"], ["G", "w-[85px]"], ["H", "w-[102px]"], ["I", "w-[47px]"], ["J", "w-[89px]"],
  ["K", "w-[63px]"], ["L", "w-[45px]"], ["M", "w-[46px]"], ["N", "w-[45px]"], ["O", "w-[46px]"], ["P", "w-[45px]"], ["Q", "w-[46px]"],
  ["R", "w-[45px]"], ["S", "w-[46px]"], ["T", "w-[45px]"], ["U", "w-[46px]"], ["V", "w-[45px]"], ["W", "w-[46px]"], ["X", "w-[46px]"], ["", ""],
];
const long = "automatically updates CCR when Assign To is populated / cannot be overridden ... update workflow to analyze Assign To first? ... when Assign To, updates";
const data: Record<number, string[]> = {
  5: ["OEC QueueName Changed", "CCR Updated", "Assigned to Updated", "Lookup CCR Exists", "Look Assign To Exists", "Status", "Expected Result", "SAR", "In Queue?"],
  6: ["Y", "#", "#", "#", "#", "New", "Fail", "SR0003010304", "Y"],
  7: ["N", "#", "#", "Y", "N", "New", "Pass", "SR0003010293", "Y"],
  8: ["N", "#", "#", "N", "Y", "New", "Pass", "SR0003010295", "Y"],
  9: ["N", "#", "#", "N", "N", "New", "Pass", "SR0003010297", "Y"],
  10: ["N", "#", "#", "Y", "Y", "New", "Pass", "SR0003010298", "Y", "X"],
  11: ["N", "Y", "N", "#", "#", "New", "Pass", "SR0003010299"],
  12: ["N", "N", "Y", "#", "#", "New", "Pass", long],
  13: ["N", "Y", "Y", "#", "#", "New", "Fail", "SR0003010301"],
  14: ["N", "#", "#", "#", "#", "Not New", "Fail", "SR0003010303"],
};

function Grid() {
  return (
    <div className="min-h-0 min-w-0 flex-1 overflow-hidden border-b border-[#a0a0a0] bg-white">
      <table className="h-[569px] w-full table-fixed border-separate border-spacing-0 font-['Lato',sans-serif] text-[10px] leading-[10px] whitespace-nowrap text-black">
        <thead>
          <tr className="bg-[#262626] text-[#d2d0ce]">
            <th className="w-[18px] border-b border-[#8c8c8c]" aria-label="Corner">
              <svg viewBox="0 0 10 10" className="ml-auto size-[9px]"><path d="M9 1v8H1z" fill="#7a7a7a" /></svg>
            </th>
            {cols.map(([c, w], i) => (
              <th key={i} className={`h-[14px] border-r border-b border-r-[#505050] border-b-[#8c8c8c] font-normal ${w}`}>{c}</th>
            ))}
          </tr>
        </thead>
        <tbody>
          {Array.from({ length: 39 }, (_, r) => {
            const n = r + 1;
            const row = data[n] ?? [];
            return (
              <tr key={n}>
                <th className="border-b border-[#5a5a5a] bg-[#262626] text-center font-normal text-[#d2d0ce]">{n < 39 ? n : ""}</th>
                {cols.slice(0, n === 12 ? 8 : 22).map((_, i) => {
                  const v = row[i] ?? "";
                  if (v === "#") return <td key={i} className="border-r border-b border-[#595959] bg-[#595959]" />;
                  return (
                    <td
                      key={i}
                      colSpan={v === long ? 15 : 1}
                      className={`border-r border-b border-[#d4d4d4] pl-[2px] ${v === long ? "overflow-hidden" : ""} ${
                        n === 5 ? "text-[9px] font-bold" : ""
                      } ${v === "Pass" && n > 10 ? "text-[#ff0000]" : ""} ${v.startsWith("SR") ? "text-[9px]" : ""}`}
                    >
                      {v}
                    </td>
                  );
                })}
              </tr>
            );
          })}
        </tbody>
      </table>
    </div>
  );
}

function Spreadsheet() {
  return (
    <section className="flex min-w-0 flex-col overflow-hidden bg-[#262626] font-['Open_Sans',sans-serif] text-[8px] text-[#f3f2f1]">
      <div className="relative flex h-[24px] shrink-0 items-center bg-[#242322] pl-[15px] text-[#b8b6b4]">
        <span>AutoSave</span>
        <button className="ml-[5px] flex h-[11px] w-[27px] items-center justify-between rounded-full bg-white pr-[3px] pl-[5px] text-[#242322]">
          On<span className="size-[6px] rounded-full bg-[#242322]" />
        </button>
        <Save className="ml-[9px] size-[13px]" strokeWidth={1.500} />
        <Undo className="ml-[9px] size-[12px]" strokeWidth={2} /><span className="ml-[2px]"><Chev /></span>
        <Redo className="ml-[7px] size-[12px]" strokeWidth={2} /><span className="ml-[2px]"><Chev /></span>
        <Pointer className="ml-[6px] size-[12px]" strokeWidth={1.500} /><span className="ml-[3px]"><Chev /></span>
        <span className="ml-[9px]"><Chev /></span>
        <span className="absolute left-[339px] flex items-center gap-[3px]">TestPlan.xlsx&nbsp; -&nbsp; Saved <Chev /></span>
        <label className="absolute left-[558px] flex h-[17px] w-[261px] items-center border border-[#555] pl-[13px]">
          <Search className="size-[11px] -scale-x-100 text-[#666]" />
          <input aria-label="Search" placeholder="Search" className="ml-[9px] w-[200px] placeholder:text-[#666]" />
        </label>
        <span className="ml-auto">Karis J Courey</span>
        <span className="ml-[7px] size-[17px] rounded-full bg-[#6b3a2a] text-center leading-[17px] text-white">KJ</span>
        <div className="ml-[9px] flex">
          {[PanelTopOpen, Minus, CopyIcon, X].map((I, i) => (
            <button key={i} aria-label="Window control" className="flex w-[33px] justify-center"><I className="size-[11px] -scale-x-100" strokeWidth={1.800} /></button>
          ))}
        </div>
      </div>
      <div className="flex h-[24px] shrink-0 items-center bg-[#323130] pr-[9px] text-[9px]">
        {[["File", "w-[37px]"], ["Home", "w-[45px]"], ["Insert", "w-[44px]"], ["Draw", "w-[43px]"], ["Page Layout", "w-[71px]"], ["Formulas", "w-[59px]"],
          ["Data", "w-[40px]"], ["Review", "w-[48px]"], ["View", "w-[39px]"], ["Developer", "w-[62px]"], ["Help", "w-[42px]"], ["Autodesk Vault", "w-[83px]"],
          ["Aras", "w-[40px]"]].map(([t, w], i) => (
          <span key={t} className={`shrink-0 whitespace-nowrap ${w} ${i === 0 ? "ml-[12px]" : ""}`}>
            <button className={`h-[18px] border-b-2 ${t === "Home" ? "border-white font-semibold" : "border-transparent"}`}>{t}</button>
          </span>
        ))}
        <button className="ml-auto flex h-[17px] items-center gap-[3px] rounded-[2px] border border-[#5c5a58] bg-[#3f3e3d] px-[5px] font-semibold"><Share className="size-[9px]" />Share</button>
        <button className="ml-[6px] flex h-[17px] items-center gap-[3px] rounded-[2px] border border-[#5c5a58] bg-[#3f3e3d] px-[5px] font-semibold"><MessageSquare className="size-[9px]" />Comments</button>
      </div>
      <div className="flex h-[67px] shrink-0 overflow-hidden bg-[#323130] shadow-md">
        <Group name="Clipboard" w="w-[117px]" launcher>
          <Big
            w="w-[40px]" lines={["Paste"]} arrow
            icon={<svg viewBox="0 0 20 22" className="h-[21px]" fill="none"><path d="M6 3H1v18h10M14 3h3v6" stroke="#f0a23a" strokeWidth="1.800" /><path d="M6 4l2-3h2l2 3v1H6z" stroke="#d2d0ce" fill="#323130" /><path d="M10 10h9v12h-9z" fill="#323130" stroke="#d2d0ce" /></svg>}
          />
          <div className="flex h-[52px] flex-1 flex-col whitespace-nowrap">
            <button className="flex flex-1 items-center gap-[2px]"><Scissors className="size-[9px] -rotate-90 text-[#b7d3ea]" />Cut</button>
            <button className="flex flex-1 items-center gap-[2px]"><CopyIcon className="size-[9px]" />Copy<span className="ml-[2px]"><Chev /></span></button>
            <button className="flex flex-1 items-center gap-[2px]"><Paintbrush className="size-[9px] text-[#e8b96a]" />Format Painter</button>
          </div>
        </Group>
        <Group name="Font" w="w-[165px]" launcher>
          <div className="flex flex-col gap-[7px] pt-[6px] pl-[6px]">
            <div className="flex items-center gap-[2px]">
              <Drop v="Calibri" w="w-[87px]" label="Font" /><Drop v="11" w="w-[30px]" label="Font size" />
              <span className="flex"><Tool n="Grow font"><span className="text-[11px]">A</span><ChevronUp className="mb-[6px] size-[5px] text-[#3a96dd]" strokeWidth={4} /></Tool>
                <Tool n="Shrink font"><span className="text-[9px]">A</span><ChevronDown className="mb-[6px] size-[5px] text-[#3a96dd]" strokeWidth={4} /></Tool></span>
            </div>
            <div className="-ml-px flex items-center text-[10px]">
              <Tool n="Bold"><b>B</b></Tool><Tool n="Italic"><i className="font-['Liberation_Serif',serif]">I</i></Tool><Tool n="Underline"><u>U</u></Tool><Chev /><Rule />
              <Tool n="Borders"><Grid3x3 className="size-[11px]" strokeWidth={1} /></Tool><Chev /><Rule />
              <Tool n="Fill colour"><span className="flex flex-col items-center"><Paintbrush className="size-[8px]" /><span className="h-[3px] w-[11px] bg-[#ffff00]" /></span></Tool><Chev />
              <Tool n="Font colour"><span className="flex flex-col items-center leading-[9px]">A<span className="h-[3px] w-[11px] bg-[#ff0000]" /></span></Tool><Chev />
            </div>
          </div>
        </Group>
        <Group name="Alignment" w="w-[199px]" launcher>
          <div className="my-[4px] flex w-[99px] flex-col gap-[7px] border-r border-[#4a4846] pt-[2px] pl-[6px]">
            <div className="flex items-center">
              <Tool n="Top"><Lines d="M0 1h12M2 4h8M0 7h12" /></Tool><Tool n="Middle"><Lines d="M0 3h12M2 6h8M0 9h12" /></Tool>
              <Tool n="Bottom" on><Lines d="M0 5h12M2 8h8M0 11h12" /></Tool><Rule />
              <Tool n="Orientation"><svg viewBox="0 0 14 14" className="size-[12px]"><text x="1" y="7" fontSize="6" fill="#e1dfdd">ab</text><path d="M4 13l9-9M13 8V4H9" stroke="#3a96dd" fill="none" /></svg></Tool><Chev />
            </div>
            <div className="flex items-center">
              <Tool n="Left"><Lines d="M0 1h12M0 4h8M0 7h12M0 10h8" /></Tool><Tool n="Centre"><Lines d="M0 1h12M2 4h8M0 7h12M2 10h8" /></Tool>
              <Tool n="Right"><Lines d="M0 1h12M4 4h8M0 7h12M4 10h8" /></Tool><Rule />
              <Tool n="Outdent"><Lines d="M0 1h12M7 4h5M7 7h5M0 10h12M5 5.500H0l2-2M0 5.500l2 2" /></Tool><Tool n="Indent"><Lines d="M0 1h12M7 4h5M7 7h5M0 10h12M0 5.500h5l-2-2M5 5.500l-2 2" /></Tool>
            </div>
          </div>
          <div className="flex flex-col gap-[7px] pt-[6px] pl-[6px] whitespace-nowrap">
            <button className="flex h-[16px] items-center gap-[2px]"><svg viewBox="0 0 10 14" className="h-[14px] w-[10px]"><text y="7" fontSize="7" fill="#e1dfdd">ab</text><text y="13" fontSize="7" fill="#e1dfdd">c</text><path d="M9 8v4H5l2-2" stroke="#3a96dd" fill="none" /></svg>Wrap Text</button>
            <button className="flex h-[16px] items-center gap-[2px]"><svg viewBox="0 0 12 12" className="w-[10px]" fill="none"><path d="M.500.500h11v11H.500zM.500 3h11M.500 9h11" stroke="#d2d0ce" /><path d="M2 6h8M4 4L2 6l2 2M8 4l2 2-2 2" stroke="#3a96dd" /></svg>Merge &amp; Center<span className="ml-[4px]"><Chev /></span></button>
          </div>
        </Group>
        <Group name="Number" w="w-[111px]" launcher>
          <div className="flex flex-col gap-[7px] pt-[6px] pl-[6px]">
            <Drop v="General" w="w-[99px]" label="Number format" />
            <div className="flex items-center">
              <Tool n="Currency"><span className="text-xs">$</span></Tool><Chev /><span className="w-[2px]" /><Tool n="Percent"><span className="text-xs">%</span></Tool>
              <Tool n="Comma"><span className="text-base font-bold">,</span></Tool><Rule />
              <Tool n="Increase decimal"><span className="text-[7px] leading-[7px]"><span className="text-[#3a96dd]">←</span>0<br />.00</span></Tool>
              <Tool n="Decrease decimal"><span className="text-[7px] leading-[7px]">.00<br /><span className="text-[#3a96dd]">→</span>0</span></Tool>
            </div>
          </div>
        </Group>
        <Group name="Styles" w="w-[422px]">
          <Big w="w-[62px]" lines={["Conditional", "Formatting"]} arrow icon={<Sheet accent={<><path d="M7 2h10v5H7zM7 13h10v5H7z" fill="#d8281c" /><path d="M7 7h5v6H7z" fill="#0a6cc4" /></>} />} />
          <Big w="w-[39px]" lines={["Format as", "Table"]} arrow icon={<Sheet accent={<path d="M7 7h15v11H7z" fill="#0a5ea8" />} extra={<path d="M23 4l-9 11-3 5 5-3z" fill="#4aa3e0" stroke="#d2d0ce" />} />} />
          <div className="mt-[2px] flex h-[44px] flex-1 bg-[#454443] pl-[3px]">
            <div className="grid flex-1 grid-cols-4 gap-x-[4px] gap-y-[4px] py-[4px] pr-[4px]">
              {gallery.map(([t, c]) => <button key={t} className={`pl-[2px] text-left leading-[12px] whitespace-nowrap ${c}`}>{t}</button>)}
            </div>
            <div className="grid w-[10px] grid-rows-3 justify-items-center gap-[2px] bg-[#3b3a39]">
              <button aria-label="Up"><ChevronUp className="size-[7px] text-[#777]" /></button>
              <button aria-label="Down"><Chev /></button><button aria-label="More"><Chev /></button>
            </div>
          </div>
          <span className="w-[6px]" />
        </Group>
        <Group name="Cells" w="w-[102px]">
          <span className="w-[6px]" />
          <Big w="w-[30px]" lines={["Insert"]} arrow icon={<Sheet accent={<path d="M5 7h18v6H5z" fill="#0a6cc4" />} extra={<path d="M10 10H0M4 6l-4 4 4 4" stroke="#4aa3e0" strokeWidth="1.500" />} />} />
          <Big w="w-[30px]" lines={["Delete"]} arrow icon={<Sheet accent={<path d="M2 7h13v6H2z" fill="#0a6cc4" />} extra={<path d="M14 6l8 8M22 6l-8 8" stroke="#e0443e" strokeWidth="1.500" />} />} />
          <Big w="w-[30px]" lines={["Format"]} arrow icon={<Sheet accent={<path d="M7 7h10v6H7z" fill="#0a6cc4" />} extra={<path d="M6 0h12" stroke="#4aa3e0" />} />} />
        </Group>
        <Group name="Editing" w="w-[142px]">
          <div className="flex h-[50px] w-[72px] flex-col pl-[8px] whitespace-nowrap">
            <button className="flex flex-1 items-center gap-[3px]"><Sigma className="size-[11px]" strokeWidth={1.500} />AutoSum<span className="ml-[2px]"><Chev /></span></button>
            <button className="flex flex-1 items-center gap-[3px]"><ArrowDownSquare className="size-[11px] text-[#8cc4ee]" />Fill <Chev /></button>
            <button className="flex flex-1 items-center gap-[3px]"><Eraser className="size-[11px] text-[#c77bd0]" />Clear <Chev /></button>
          </div>
          <Big w="w-[32px]" lines={["Sort &", "Filter"]} arrow icon={<><span className="text-[9px] leading-[9px]"><span className="text-[#3a96dd]">A</span><br />Z</span><Funnel className="size-[12px]" strokeWidth={1.500} /></>} />
          <Big w="w-[33px]" lines={["Find &", "Select"]} arrow icon={<Search className="size-[20px] -scale-x-100" strokeWidth={1.200} />} />
        </Group>
        <Group name="Analysis" w="w-[45px]">
          <Big w="w-[45px]" lines={["Analyze", "Data"]} icon={<Sheet accent={null} extra={<><circle cx="12" cy="9" r="6" fill="#323130" stroke="#d2d0ce" strokeWidth="1.500" /><path d="M10 12V8M14 12V6" stroke="#3a96dd" strokeWidth="2" /><path d="M16 14l6 5" stroke="#d2d0ce" strokeWidth="1.500" /></>} />} />
        </Group>
        <button aria-label="Collapse ribbon" className="mt-auto mr-[6px] mb-[2px] ml-auto"><ChevronUp className="size-[9px]" /></button>
      </div>
      <div className="flex h-[32px] shrink-0 items-center gap-[3px] pr-[3px] pl-[3px] text-[9px]">
        <label className="flex h-[19px] w-[244px] items-center border border-[#484644] bg-[#383838] pr-[3px] pl-[5px]">
          <input aria-label="Name box" defaultValue="M10" className="w-0 flex-1" /><MdArrowDropDown className="size-[12px]" />
        </label>
        <MoreVertical className="mx-[2px] size-[12px]" />
        <div className="flex h-[19px] w-[78px] items-center justify-around border border-[#484644] bg-[#383838]">
          <X className="size-[11px] text-[#777]" /><Check className="size-[11px] text-[#777]" /><i className="font-['Liberation_Serif',serif] text-[11px] font-bold">fx</i>
        </div>
        <label className="flex h-[19px] flex-1 items-center border border-[#484644] bg-[#383838] pr-[3px] pl-[10px]">
          <input aria-label="Formula" defaultValue="X" className="flex-1" /><Chev />
        </label>
      </div>
      <div className="flex min-h-0 flex-1">
        <Grid />
        <div className="mr-[2px] ml-[3px] flex w-[10px] flex-col items-center bg-[#363636] text-[#8a8886]">
          <MdArrowDropDown className="size-[12px] shrink-0 rotate-180" />
          <span className="h-[400px] w-full bg-[#505050]" />
          <MdArrowDropDown className="mt-auto size-[12px] shrink-0" />
        </div>
      </div>
      <div className="flex h-[19px] shrink-0 items-start pr-[15px]">
        <ChevronLeft className="mt-[5px] ml-[16px] size-[9px] text-[#8a8886]" /><ChevronRight className="mt-[5px] ml-[11px] size-[9px] text-[#8a8886]" />
        <button className="ml-[27px] h-[17px] w-[46px] border-b-2 border-[#217346] bg-white text-[9px] leading-[15px] font-bold text-[#217346]">Sheet1</button>
        <CirclePlus className="mt-[4px] ml-[23px] size-[12px]" strokeWidth={1.500} />
        <MoreVertical className="mt-[4px] mr-[6px] ml-auto size-[12px]" />
        <div className="mt-[4px] flex h-[11px] w-[519px] items-center bg-[#363636] text-[#8a8886]">
          <ChevronLeft className="size-[9px]" /><span className="ml-[64px] h-full flex-1 bg-[#505050]" /><ChevronRight className="size-[9px]" />
        </div>
      </div>
      <div className="flex h-[16px] shrink-0 items-center border-t border-[#454443] bg-[#323130] pr-[5px] pl-[6px]">
        Ready<CircleDot className="ml-[15px] size-[10px]" strokeWidth={1.500} />
        <MonitorCog className="ml-auto size-[10px]" /><span className="ml-[2px]">Display Settings</span>
        <div className="ml-[14px] flex h-full">
          {[Grid3x3, FileText, Columns2].map((I, i) => (
            <button key={i} aria-label="View" className={`flex w-[28px] items-center justify-center ${i === 0 ? "bg-[#5c5a58]" : ""}`}><I className="size-[10px]" strokeWidth={1.800} /></button>
          ))}
        </div>
        <Minus className="mr-[3px] ml-[3px] size-[7px]" />
        <input type="range" aria-label="Zoom" className="h-px w-[71px] appearance-none bg-white [&::-webkit-slider-thumb]:h-[8px] [&::-webkit-slider-thumb]:w-[3px] [&::-webkit-slider-thumb]:appearance-none [&::-webkit-slider-thumb]:bg-white" />
        <Plus className="mr-[7px] ml-[3px] size-[8px]" />100%
      </div>
      <Taskbar><Clock /></Taskbar>
    </section>
  );
}

export default function App() {
  return (
    <div className="grid h-screen grid-cols-3 overflow-hidden bg-black">
      <Orchestrator />
      <Desktop />
      <Spreadsheet />
    </div>
  );
}
